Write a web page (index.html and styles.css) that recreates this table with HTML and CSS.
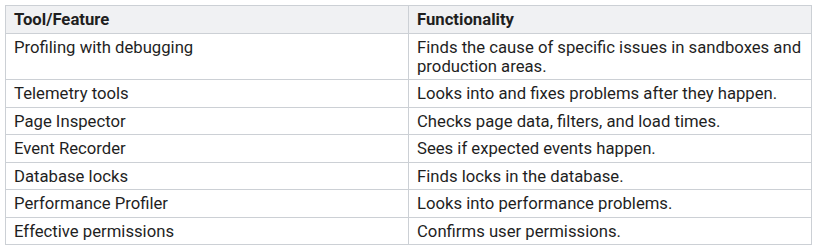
FILE: index.html
```html
<!DOCTYPE html>
<html>
<head>
<meta charset="utf-8">
<link rel="stylesheet" href="styles.css">
</head>
<body>
<table class="grid">
  <thead>
    <tr><th>Tool/Feature</th><th>Functionality</th></tr>
  </thead>
  <tbody>
    <tr><td>Profiling with debugging</td><td>Finds the cause of specific issues in sandboxes and production areas.</td></tr>
    <tr><td>Telemetry tools</td><td>Looks into and fixes problems after they happen.</td></tr>
    <tr><td>Page Inspector</td><td>Checks page data, filters, and load times.</td></tr>
    <tr><td>Event Recorder</td><td>Sees if expected events happen.</td></tr>
    <tr><td>Database locks</td><td>Finds locks in the database.</td></tr>
    <tr><td>Performance Profiler</td><td>Looks into performance problems.</td></tr>
    <tr><td>Effective permissions</td><td>Confirms user permissions.</td></tr>
  </tbody>
</table>
</body>
</html>
```
FILE: styles.css
```css
html, body {
  margin: 0;
  background: #ffffff;
}
body {
  padding: 5px;
  font-family: Roboto, "Liberation Sans", sans-serif;
  font-size: 16.7px;
  color: #1f1f1f;
}
.grid {
  width: 100%;
  border-collapse: collapse;
  table-layout: fixed;
}
.grid th, .grid td {
  border: 1px solid #ccd0d5;
  padding: 4px 8px 3.5px;
  line-height: 19px;
  text-align: left;
  vertical-align: top;
}
.grid th {
  background: #f0f1f3;
  font-weight: 700;
}
```
